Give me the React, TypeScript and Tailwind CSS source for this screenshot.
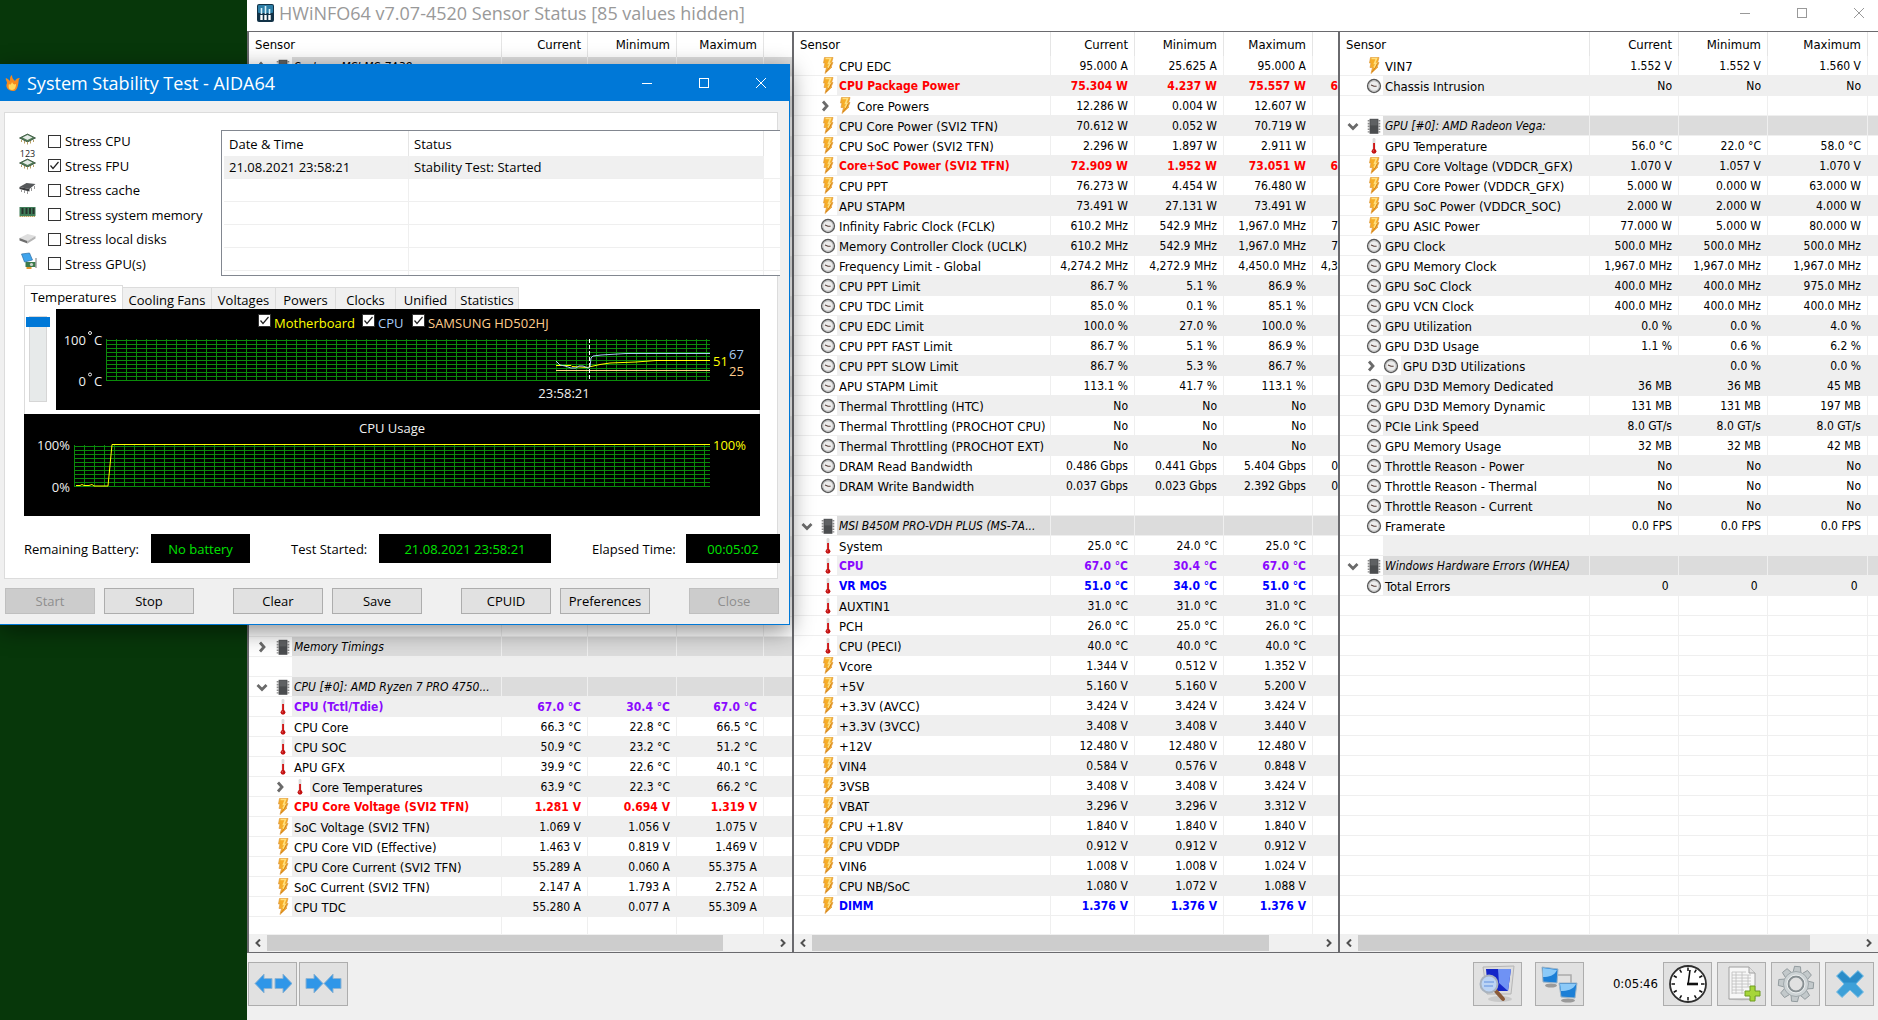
import type { ReactNode } from "react"

type Kind = "bolt" | "temp" | "clock" | "chip"
type Tone = "normal" | "red" | "violet" | "blue"

type SensorRow = {
  kind?: Kind
  name?: string
  values?: string[]
  tone?: Tone
  group?: "open" | "closed"
  sub?: boolean
  alt?: boolean
  // clipped start of the Average column
  rest?: string
}

const TONES: Record<Tone, string> = {
  normal: "text-black",
  red: "font-bold text-[#ff0000]",
  violet: "font-bold text-[#8a0aff]",
  blue: "font-bold text-[#0000ff]",
}

const row = (kind: Kind, name: string, a: string, b: string, c: string, extra: SensorRow = {}): SensorRow => ({
  kind,
  name,
  values: [a, b, c],
  ...extra,
})
const group = (name: string, state: "open" | "closed" = "open"): SensorRow => ({ kind: "chip", name, group: state })
const blanks = (count: number): SensorRow[] => Array.from({ length: count }, () => ({}))

// Every other row is shaded, starting with row `first`
const stripe = (rows: SensorRow[], first: number): SensorRow[] =>
  rows.map((r, i) => ({ ...r, alt: r.alt ?? i % 2 === first }))

const LEFT_ROWS: SensorRow[] = [
  ...stripe(
    [
      group("System: MSI MS-7A38", "closed"),
      ...blanks(27),
      { alt: false },
      group("Memory Timings", "closed"),
      {},
      group("CPU [#0]: AMD Ryzen 7 PRO 4750..."),
      row("temp", "CPU (Tctl/Tdie)", "67.0 °C", "30.4 °C", "67.0 °C", { tone: "violet" }),
      row("temp", "CPU Core", "66.3 °C", "22.8 °C", "66.5 °C"),
      row("temp", "CPU SOC", "50.9 °C", "23.2 °C", "51.2 °C"),
      row("temp", "APU GFX", "39.9 °C", "22.6 °C", "40.1 °C"),
      row("temp", "Core Temperatures", "63.9 °C", "22.3 °C", "66.2 °C", { sub: true }),
      row("bolt", "CPU Core Voltage (SVI2 TFN)", "1.281 V", "0.694 V", "1.319 V", { tone: "red" }),
      row("bolt", "SoC Voltage (SVI2 TFN)", "1.069 V", "1.056 V", "1.075 V"),
      row("bolt", "CPU Core VID (Effective)", "1.463 V", "0.819 V", "1.469 V"),
      row("bolt", "CPU Core Current (SVI2 TFN)", "55.289 A", "0.060 A", "55.375 A"),
      row("bolt", "SoC Current (SVI2 TFN)", "2.147 A", "1.793 A", "2.752 A"),
      row("bolt", "CPU TDC", "55.280 A", "0.077 A", "55.309 A"),
    ],
    0,
  ),
  ...blanks(1),
]

const MIDDLE_ROWS: SensorRow[] = [
  ...stripe(
    [
      row("bolt", "CPU EDC", "95.000 A", "25.625 A", "95.000 A"),
      row("bolt", "CPU Package Power", "75.304 W", "4.237 W", "75.557 W", { tone: "red", rest: "6" }),
      row("bolt", "Core Powers", "12.286 W", "0.004 W", "12.607 W", { sub: true }),
      row("bolt", "CPU Core Power (SVI2 TFN)", "70.612 W", "0.052 W", "70.719 W"),
      row("bolt", "CPU SoC Power (SVI2 TFN)", "2.296 W", "1.897 W", "2.911 W"),
      row("bolt", "Core+SoC Power (SVI2 TFN)", "72.909 W", "1.952 W", "73.051 W", { tone: "red", rest: "6" }),
      row("bolt", "CPU PPT", "76.273 W", "4.454 W", "76.480 W"),
      row("bolt", "APU STAPM", "73.491 W", "27.131 W", "73.491 W"),
      row("clock", "Infinity Fabric Clock (FCLK)", "610.2 MHz", "542.9 MHz", "1,967.0 MHz", { rest: "7" }),
      row("clock", "Memory Controller Clock (UCLK)", "610.2 MHz", "542.9 MHz", "1,967.0 MHz", { rest: "7" }),
      row("clock", "Frequency Limit - Global", "4,274.2 MHz", "4,272.9 MHz", "4,450.0 MHz", { rest: "4,3" }),
      row("clock", "CPU PPT Limit", "86.7 %", "5.1 %", "86.9 %"),
      row("clock", "CPU TDC Limit", "85.0 %", "0.1 %", "85.1 %"),
      row("clock", "CPU EDC Limit", "100.0 %", "27.0 %", "100.0 %"),
      row("clock", "CPU PPT FAST Limit", "86.7 %", "5.1 %", "86.9 %"),
      row("clock", "CPU PPT SLOW Limit", "86.7 %", "5.3 %", "86.7 %"),
      row("clock", "APU STAPM Limit", "113.1 %", "41.7 %", "113.1 %"),
      row("clock", "Thermal Throttling (HTC)", "No", "No", "No"),
      row("clock", "Thermal Throttling (PROCHOT CPU)", "No", "No", "No"),
      row("clock", "Thermal Throttling (PROCHOT EXT)", "No", "No", "No"),
      row("clock", "DRAM Read Bandwidth", "0.486 Gbps", "0.441 Gbps", "5.404 Gbps", { rest: "0" }),
      row("clock", "DRAM Write Bandwidth", "0.037 Gbps", "0.023 Gbps", "2.392 Gbps", { rest: "0" }),
      {},
      group("MSI B450M PRO-VDH PLUS (MS-7A..."),
      row("temp", "System", "25.0 °C", "24.0 °C", "25.0 °C"),
      row("temp", "CPU", "67.0 °C", "30.4 °C", "67.0 °C", { tone: "violet" }),
      row("temp", "VR MOS", "51.0 °C", "34.0 °C", "51.0 °C", { tone: "blue" }),
      row("temp", "AUXTIN1", "31.0 °C", "31.0 °C", "31.0 °C"),
      row("temp", "PCH", "26.0 °C", "25.0 °C", "26.0 °C"),
      row("temp", "CPU (PECI)", "40.0 °C", "40.0 °C", "40.0 °C"),
      row("bolt", "Vcore", "1.344 V", "0.512 V", "1.352 V"),
      row("bolt", "+5V", "5.160 V", "5.160 V", "5.200 V"),
      row("bolt", "+3.3V (AVCC)", "3.424 V", "3.424 V", "3.424 V"),
      row("bolt", "+3.3V (3VCC)", "3.408 V", "3.408 V", "3.440 V"),
      row("bolt", "+12V", "12.480 V", "12.480 V", "12.480 V"),
      row("bolt", "VIN4", "0.584 V", "0.576 V", "0.848 V"),
      row("bolt", "3VSB", "3.408 V", "3.408 V", "3.424 V"),
      row("bolt", "VBAT", "3.296 V", "3.296 V", "3.312 V"),
      row("bolt", "CPU +1.8V", "1.840 V", "1.840 V", "1.840 V"),
      row("bolt", "CPU VDDP", "0.912 V", "0.912 V", "0.912 V"),
      row("bolt", "VIN6", "1.008 V", "1.008 V", "1.024 V"),
      row("bolt", "CPU NB/SoC", "1.080 V", "1.072 V", "1.088 V"),
      row("bolt", "DIMM", "1.376 V", "1.376 V", "1.376 V", { tone: "blue" }),
    ],
    1,
  ),
  ...blanks(1),
]

const RIGHT_ROWS: SensorRow[] = [
  ...stripe(
    [
      row("bolt", "VIN7", "1.552 V", "1.552 V", "1.560 V"),
      row("clock", "Chassis Intrusion", "No", "No", "No"),
      {},
      group("GPU [#0]: AMD Radeon Vega:"),
      row("temp", "GPU Temperature", "56.0 °C", "22.0 °C", "58.0 °C"),
      row("bolt", "GPU Core Voltage (VDDCR_GFX)", "1.070 V", "1.057 V", "1.070 V"),
      row("bolt", "GPU Core Power (VDDCR_GFX)", "5.000 W", "0.000 W", "63.000 W"),
      row("bolt", "GPU SoC Power (VDDCR_SOC)", "2.000 W", "2.000 W", "4.000 W"),
      row("bolt", "GPU ASIC Power", "77.000 W", "5.000 W", "80.000 W"),
      row("clock", "GPU Clock", "500.0 MHz", "500.0 MHz", "500.0 MHz"),
      row("clock", "GPU Memory Clock", "1,967.0 MHz", "1,967.0 MHz", "1,967.0 MHz"),
      row("clock", "GPU SoC Clock", "400.0 MHz", "400.0 MHz", "975.0 MHz"),
      row("clock", "GPU VCN Clock", "400.0 MHz", "400.0 MHz", "400.0 MHz"),
      row("clock", "GPU Utilization", "0.0 %", "0.0 %", "4.0 %"),
      row("clock", "GPU D3D Usage", "1.1 %", "0.6 %", "6.2 %"),
      row("clock", "GPU D3D Utilizations", "", "0.0 %", "0.0 %", { sub: true }),
    ],
    1,
  ),
  ...stripe(
    [
      row("clock", "GPU D3D Memory Dedicated", "36 MB", "36 MB", "45 MB"),
      row("clock", "GPU D3D Memory Dynamic", "131 MB", "131 MB", "197 MB"),
      row("clock", "PCIe Link Speed", "8.0 GT/s", "8.0 GT/s", "8.0 GT/s"),
      row("clock", "GPU Memory Usage", "32 MB", "32 MB", "42 MB"),
      row("clock", "Throttle Reason - Power", "No", "No", "No"),
      row("clock", "Throttle Reason - Thermal", "No", "No", "No"),
      row("clock", "Throttle Reason - Current", "No", "No", "No"),
      row("clock", "Framerate", "0.0 FPS", "0.0 FPS", "0.0 FPS"),
      {},
      group("Windows Hardware Errors (WHEA)"),
      row("clock", "Total Errors", "0 ", "0 ", "0 "),
    ],
    0,
  ),
  ...blanks(17),
]

function SensorIcon({ kind }: { kind: Kind }) {
  if (kind === "bolt") {
    return (
      <svg className="h-[17px] w-4 shrink-0" viewBox="0 0 16 17">
        <path d="M4.500.5H13L11.600 5.500H13L11 10h1L5 16.500 6.500 10.500H4L5 6H3.500z" fill="#f6ad28" stroke="#e09a3c" strokeWidth=".7" />
        <path d="M5.500 1.500h5L8.500 6.500l2 0-2.500 4" fill="none" stroke="#ffdf7e" strokeWidth="1.6" />
        <path d="M11.500 6.200 9.500 10.500 6 15" fill="none" stroke="#c97a16" strokeWidth=".9" />
      </svg>
    )
  }
  if (kind === "temp") {
    return (
      <svg className="h-4 w-4 shrink-0" viewBox="0 0 16 16">
        <rect x="6.6" y="0" width="2.8" height="12" rx="1.2" fill="#dcdcdc" />
        <rect x="7.1" y="5" width="1.9" height="8" fill="#d01818" />
        <circle cx="8" cy="13.3" r="2.4" fill="#c31212" />
        <circle cx="7.3" cy="12.8" r=".6" fill="#f08080" />
      </svg>
    )
  }
  if (kind === "clock") {
    return (
      <svg className="h-4 w-4 shrink-0" viewBox="0 0 16 16">
        <circle cx="8" cy="8" r="6.4" fill="#ececec" stroke="#5a5a5a" strokeWidth="1.5" />
        <circle cx="8" cy="8" r="5.2" fill="none" stroke="#bdbdbd" strokeWidth="1" />
        <path d="M5 7 8 8.2h2.6" fill="none" stroke="#5a4038" strokeWidth="1.1" />
      </svg>
    )
  }
  return (
    <svg className="h-4 w-4 shrink-0" viewBox="0 0 16 16">
      <path d="M2.6 2v12.6M13.4 2v12.6" stroke="#8a8a8a" strokeWidth="1.8" strokeDasharray="1.6 1.2" />
      <rect x="3.6" y=".8" width="8.8" height="15" fill="#4b4d4f" />
      <rect x="4.4" y="1.4" width="7.2" height="6" fill="#5f6163" />
    </svg>
  )
}

function Chevron({ open }: { open: boolean }) {
  return (
    <svg className="h-3 w-3" viewBox="0 0 12 12" fill="none" stroke="#6a6a6a" strokeWidth="2.8">
      <path d={open ? "M1.5 4 6 8.5 10.500 4" : "M4 1.5 8 6l-4 4.500"} />
    </svg>
  )
}

function SensorLine({ r }: { r: SensorRow }) {
  const bg = r.group ? "bg-[#dcdcdc]" : r.alt ? "bg-[#efefef]" : "bg-white"
  const cell = `h-5 overflow-hidden border-b border-r border-[#efefef] p-0 whitespace-pre ${bg}`
  const tone = r.tone ?? "normal"
  const nameStyle = r.group ? "italic" : tone === "normal" ? "text-[13px]" : ""
  return (
    <tr className={TONES[tone]}>
      <td className={cell}>
        <div className="flex h-[19px] items-center">
          {r.sub ? (
            <div className="flex h-full w-[61px] shrink-0 items-center bg-white pl-[22px]">
              <button aria-label={`Expand ${r.name}`} className="mr-[3px] flex w-[18px] justify-center">
                <Chevron open={false} />
              </button>
              {r.kind && <SensorIcon kind={r.kind} />}
            </div>
          ) : (
            <div className="flex h-full w-[43px] shrink-0 items-center bg-white">
              <div className="flex w-[26px] justify-center">
                {r.group && (
                  <button aria-label={`Toggle ${r.name}`}>
                    <Chevron open={r.group === "open"} />
                  </button>
                )}
              </div>
              {r.kind && <SensorIcon kind={r.kind} />}
            </div>
          )}
          <span className={`pt-[2px] pl-[2px] ${nameStyle}`}>{r.name}</span>
        </div>
      </td>
      {[0, 1, 2].map((i) => (
        <td key={i} className={`${cell} pt-[2px] pr-[6px] text-right`}>
          {r.values?.[i]}
        </td>
      ))}
      <td className={`h-5 overflow-hidden border-b border-[#efefef] p-0 pt-[2px] text-right whitespace-pre ${bg}`}>
        {r.rest}
      </td>
    </tr>
  )
}

function ScrollBar() {
  return (
    <div className="flex h-[18px] shrink-0 items-center bg-[#f0f0f0] py-px">
      <button aria-label="Scroll left" className="flex w-[18px] shrink-0 justify-center">
        <svg className="h-2 w-2" viewBox="0 0 8 8" fill="none" stroke="#505050" strokeWidth="2">
          <path d="M6 .5 2.500 4 6 7.500" />
        </svg>
      </button>
      <div className="h-full flex-1">
        <div className="h-full w-[90%] bg-[#cdcdcd]" />
      </div>
      <button aria-label="Scroll right" className="flex w-[18px] shrink-0 justify-center">
        <svg className="h-2 w-2" viewBox="0 0 8 8" fill="none" stroke="#505050" strokeWidth="2">
          <path d="M2 .5 5.500 4 2 7.500" />
        </svg>
      </button>
    </div>
  )
}

function SensorPanel({ rows, cols, headHeight }: { rows: SensorRow[]; cols: string[]; headHeight: string }) {
  const head = "border-r border-[#e5e5e5] p-0 text-[13px] font-normal"
  return (
    <section className="flex min-h-0 min-w-0 flex-col border-l-2 border-[#6a6a6e] bg-white">
      <div className="min-h-0 flex-1 overflow-hidden">
        <table className="w-full table-fixed border-separate border-spacing-0 font-['DejaVu_Sans_Condensed','DejaVu_Sans',sans-serif] text-[12px] leading-[17px] text-black">
          <colgroup>
            <col />
            {cols.map((w, i) => (
              <col key={i} className={w} />
            ))}
          </colgroup>
          <thead>
            <tr className={headHeight}>
              <th className={`${head} pl-[6px] text-left`}>Sensor</th>
              <th className={`${head} pr-[6px] text-right`}>Current</th>
              <th className={`${head} pr-[6px] text-right`}>Minimum</th>
              <th className={`${head} pr-[6px] text-right`}>Maximum</th>
              <th className="p-0" />
            </tr>
          </thead>
          <tbody>
            {rows.map((r, i) => (
              <SensorLine key={i} r={r} />
            ))}
          </tbody>
        </table>
      </div>
      <ScrollBar />
    </section>
  )
}

function ToolButton({ label, children }: { label: string; children: ReactNode }) {
  return (
    <button
      aria-label={label}
      className="flex h-11 w-[49px] shrink-0 items-center justify-center border border-[#adadad] bg-[#e1e1e1]"
    >
      {children}
    </button>
  )
}

const ARROW_RIGHT = "M1 5.500h8V1l9 9.500L9 20v-4.500H1z"
const ARROW_LEFT = "M18 5.500h-8V1l-9 9.500L10 20v-4.500h8z"

function ArrowPair({ inward }: { inward: boolean }) {
  return (
    <svg className="h-[22px] w-[38px]" viewBox="0 0 38 22" fill="#2f96e8" stroke="#8fb4d2" strokeWidth="1">
      <path d={inward ? ARROW_RIGHT : ARROW_LEFT} />
      <path d={inward ? ARROW_LEFT : ARROW_RIGHT} transform={inward ? "translate(18 0)" : "translate(20 0)"} />
    </svg>
  )
}

function Toolbar() {
  return (
    <footer className="flex h-[67px] shrink-0 items-start justify-between bg-[#f0f0f0] pt-[9px] pr-1 pl-px">
      <div className="flex gap-[2px]">
        <ToolButton label="Expand columns">
          <ArrowPair inward={false} />
        </ToolButton>
        <ToolButton label="Shrink columns">
          <ArrowPair inward />
        </ToolButton>
      </div>
      <div className="flex items-center">
        <div className="flex gap-[13px]">
          <ToolButton label="Summary">
            <svg className="h-[38px] w-[38px]" viewBox="0 0 38 38">
              <ellipse cx="22" cy="34" rx="12" ry="3" fill="#c9c9c9" />
              <path d="M5 2l31-1-3 28H9z" fill="#dcdcdc" stroke="#b5b5b5" />
              <path d="M8 4h25l-3 22H10z" fill="#1426c8" />
              <path d="M20 4h13l-3 22-9-8z" fill="#6f92f4" />
              <path d="M17 25l8 9" stroke="#8a5a38" strokeWidth="4" strokeLinecap="round" />
              <circle cx="11" cy="19" r="8.500" fill="#bcd4f4" stroke="#a9b3bf" strokeWidth="2" />
              <path d="M6 17h10M6 21h9" stroke="#7fa6e6" strokeWidth="1.5" />
            </svg>
          </ToolButton>
          <ToolButton label="Remote monitoring">
            <svg className="h-[38px] w-[38px]" viewBox="0 0 38 38">
              <path d="M18 10h13v10" fill="none" stroke="#aaa" strokeWidth="1.5" />
              <ellipse cx="11" cy="20.500" rx="6" ry="2" fill="#9a9a9a" />
              <path d="M2 2l16 2-1 14-14-1z" fill="#1c7fd6" stroke="#9db4c6" />
              <path d="M3 3l14 2c-3 6-8 7-14 7z" fill="#8ccaf8" />
              <ellipse cx="28" cy="35.500" rx="7" ry="2" fill="#9a9a9a" />
              <path d="M19 18l18 0-2 15-14-1z" fill="#1c7fd6" stroke="#9db4c6" />
              <path d="M20 19h16c-3 6-9 7-15 7z" fill="#8ccaf8" />
            </svg>
          </ToolButton>
        </div>
        <span className="pr-[5px] pl-[29px] font-['DejaVu_Sans_Condensed','DejaVu_Sans',sans-serif] text-[13px] text-black">
          0:05:46
        </span>
        <div className="flex gap-[5px]">
          <ToolButton label="Reset timer">
            <svg className="h-10 w-10" viewBox="0 0 40 40">
              <circle cx="20" cy="20" r="18" fill="#fff" stroke="#2e2e2e" strokeWidth="1.8" />
              {Array.from({ length: 12 }, (_, i) => (
                <path key={i} d="M20 3.500V7" stroke="#111" strokeWidth="1.5" transform={`rotate(${i * 30} 20 20)`} />
              ))}
              <path d="M20 21l2-15" stroke="#111" strokeWidth="1.6" />
              <path d="M19 20h11" stroke="#111" strokeWidth="2.600" />
            </svg>
          </ToolButton>
          <ToolButton label="Log to file">
            <svg className="h-[38px] w-[38px]" viewBox="0 0 38 38">
              <ellipse cx="19" cy="34" rx="14" ry="1.5" fill="#c8c8c8" />
              <path d="M6 2h20l6 6v26H6z" fill="#f7f7f7" stroke="#a0a0a0" />
              <path d="M26 2v6h6" fill="#e2e2e2" stroke="#a0a0a0" />
              <path
                d="M9 7h14M9 10h19M9 13h19M9 16h19M9 19h19M9 22h19M9 25h12M9 28h12M13 7v22M19 7v22M25 10v12M9 7v22"
                stroke="#c2c2c2"
                strokeWidth=".9"
              />
              <path d="M27 21h5v5h5v5h-5v5h-5v-5h-5v-5h5z" fill="#a6d638" stroke="#6f9c22" />
            </svg>
          </ToolButton>
          <ToolButton label="Settings">
            <svg className="h-[38px] w-[38px]" viewBox="0 0 38 38">
              {Array.from({ length: 8 }, (_, i) => (
                <path
                  key={i}
                  d="M15 8l1-6.500h6L23 8z"
                  fill="#c3c9cb"
                  stroke="#8f989b"
                  strokeWidth=".9"
                  transform={`rotate(${i * 45 + 5} 19 19)`}
                />
              ))}
              <circle cx="19" cy="19" r="12.500" fill="#cdd3d5" stroke="#a0a8ab" />
              <circle cx="19" cy="19" r="7.500" fill="#e1e1e1" stroke="#878f92" strokeWidth="2" />
              <circle cx="19" cy="19" r="9" fill="none" stroke="#eef1f2" strokeWidth=".9" />
            </svg>
          </ToolButton>
          <ToolButton label="Close sensors">
            <svg className="h-[30px] w-[30px]" viewBox="0 0 30 30">
              <path
                d="M7 1.500 15 9l8-7.500L28.500 7 21 15l7.500 8-5.500 5.500L15 21l-8 7.500L1.500 23 9 15 1.500 7z"
                fill="#3da0d8"
                stroke="#7dbfe4"
                strokeLinejoin="round"
              />
              <path d="M7 2.500 15 10l8-7.500L27.500 7 21 13.500H9L2.500 7z" fill="#2b8cc8" />
            </svg>
          </ToolButton>
        </div>
      </div>
    </footer>
  )
}

function WindowControls({ className }: { className: string }) {
  return (
    <div className={`flex items-center ${className}`}>
      <button aria-label="Minimize">
        <svg className="h-3 w-3" viewBox="0 0 12 12" stroke="currentColor">
          <path d="M1 6.500h10" />
        </svg>
      </button>
      <button aria-label="Maximize">
        <svg className="h-3 w-3" viewBox="0 0 12 12" fill="none" stroke="currentColor">
          <rect x="1.5" y="1.5" width="9" height="9" />
        </svg>
      </button>
      <button aria-label="Close">
        <svg className="h-3 w-3" viewBox="0 0 12 12" stroke="currentColor">
          <path d="M1 1l10 10M11 1 1 11" />
        </svg>
      </button>
    </div>
  )
}

function CheckBox({ id, checked = false }: { id: string; checked?: boolean }) {
  return (
    <span className="grid h-[13px] w-[13px] shrink-0">
      <input
        id={id}
        type="checkbox"
        defaultChecked={checked}
        className="peer col-start-1 row-start-1 h-[13px] w-[13px] appearance-none border border-[#333] bg-white"
      />
      <svg
        className="pointer-events-none invisible col-start-1 row-start-1 h-[13px] w-[13px] peer-checked:visible"
        viewBox="0 0 13 13"
        fill="none"
        stroke="#222"
        strokeWidth="1.2"
      >
        <path d="M2.500 6.500 5 9.500 10.500 3" />
      </svg>
    </span>
  )
}

const chipBoard = (
  <>
    <path d="M1 8l8-4 8 4-8 4z" fill="#4f7a55" stroke="#38523c" strokeWidth=".8" />
    <path d="M4 7.500 9 5l5 2.500L9 10z" fill="#e6ece8" />
    <path d="M3 10v2M6 11v2.500M9 12v2.500M12 11v2.500M15 10v2" stroke="#b8a066" strokeWidth="1" />
  </>
)

const STRESS_OPTIONS: { id: string; label: string; checked?: boolean; icon: ReactNode }[] = [
  { id: "cpu", label: "Stress CPU", icon: chipBoard },
  {
    id: "fpu",
    label: "Stress FPU",
    checked: true,
    icon: (
      <>
        <text x="9" y="2" textAnchor="middle" fontSize="9" fill="#222">
          123
        </text>
        {chipBoard}
      </>
    ),
  },
  {
    id: "cache",
    label: "Stress cache",
    icon: (
      <>
        <path d="M1 8l7-4 9 1-6 5z" fill="#55585a" />
        <path d="M1 8l10 2v2.500L1 10z" fill="#3b3d3f" />
        <path d="M3 10v3M6 11v3M9 12v3M13 9v3M16 7v3" stroke="#9a9a9a" strokeWidth="1" />
      </>
    ),
  },
  {
    id: "memory",
    label: "Stress system memory",
    icon: (
      <>
        <path d="M1 3h16v9H1z" fill="#3f7d58" />
        <path d="M3 4h2v6H3zM7 4h2v6H7zM10.500 4h2v6h-2zM14 4h2v6h-2z" fill="#26352c" />
        <path d="M1 12.500h16" stroke="#b9a25c" strokeDasharray="1.500 .5" />
      </>
    ),
  },
  {
    id: "disks",
    label: "Stress local disks",
    icon: (
      <>
        <path d="M1 10l8-4 8 2-8 5z" fill="#dedede" />
        <path d="M1 10l8 3v2.500l-8-3z" fill="#6e6e6e" />
        <path d="M9 13l8-5v2.500l-8 5z" fill="#b4b4b4" />
      </>
    ),
  },
  {
    id: "gpu",
    label: "Stress GPU(s)",
    icon: (
      <>
        <path d="M3 1l8-1 3 7-8 2z" fill="#3fa4ec" stroke="#2b6fa6" strokeWidth=".7" />
        <path d="M7 9h10v5H7z" fill="#3c7a4a" />
        <circle cx="13" cy="11.500" r="1.600" fill="#cfd6d0" />
        <path d="M8 14h5v2H8z" fill="#e0962e" />
        <path d="M17.500 5v10" stroke="#777" />
      </>
    ),
  },
]

const TABS = [
  { label: "Cooling Fans", width: "w-[89px]" },
  { label: "Voltages", width: "w-16" },
  { label: "Powers", width: "w-[60px]" },
  { label: "Clocks", width: "w-[60px]" },
  { label: "Unified", width: "w-[60px]" },
  { label: "Statistics", width: "w-[63px]" },
]

function Grid({ x, top, width }: { x: number; top: number; width: number }) {
  const cols = Math.ceil(width / 10)
  return (
    <g stroke="#0a8a0a" shapeRendering="crispEdges">
      {Array.from({ length: cols }, (_, i) => (
        <path key={i} d={`M${x + i * 10 + 0.5} ${top}v42`} />
      ))}
      {Array.from({ length: 11 }, (_, i) => (
        <path key={i} d={`M${x} ${top + i * 4 + 1.5}h${width}`} />
      ))}
    </g>
  )
}

function TemperatureChart() {
  return (
    <div className="h-[101px] w-[704px] bg-black">
      <div className="flex h-5 items-start pt-[5px] pl-[202px] text-[13px] leading-[18px]">
        <CheckBox id="legend-mb" checked />
        <label htmlFor="legend-mb" className="w-[91px] pl-[3px] text-[#ffff00]">
          Motherboard
        </label>
        <CheckBox id="legend-cpu" checked />
        <label htmlFor="legend-cpu" className="w-[37px] pl-[3px] text-[#a9cdf5]">
          CPU
        </label>
        <CheckBox id="legend-hdd" checked />
        <label htmlFor="legend-hdd" className="pl-[3px] text-[#ffcc8c]">
          SAMSUNG HD502HJ
        </label>
      </div>
      <svg className="h-[81px] w-[704px] text-[13px]" viewBox="0 -8 704 81">
        <Grid x={50} top={2} width={604} />
        <g fill="#f0f0f0">
          <text x="30" y="8" textAnchor="end">100</text>
          <circle cx="34" cy="-4" r="1.5" fill="none" stroke="#f0f0f0" />
          <text x="38" y="8">C</text>
          <text x="30" y="49" textAnchor="end">0</text>
          <circle cx="34" cy="37.500" r="1.5" fill="none" stroke="#f0f0f0" />
          <text x="38" y="49">C</text>
          <text x="508" y="61" textAnchor="middle">23:58:21</text>
        </g>
        <path d="M500 33.500h154" stroke="#ffdc82" />
        <path d="M500 28.500h15l1 1 15 1 4-1 9-2 10-1.500 26-1 20-1.500h54" fill="none" stroke="#ffff00" />
        <path
          d="M500 24l4 4 5 1 6 2h5l3-2 4 0 5 2 2-1 1-9 2-2 8-1 25-1.500h84"
          fill="none"
          stroke="#a9cdf5"
        />
        <path d="M533.500 2v40" stroke="#fff" strokeDasharray="4 2" />
        <text x="657" y="29" fill="#ffff00">51</text>
        <text x="673" y="22" fill="#a9cdf5">67</text>
        <text x="673" y="39" fill="#ffcc8c">25</text>
      </svg>
    </div>
  )
}

function UsageChart() {
  return (
    <svg className="h-[102px] w-[736px] bg-black text-[13px]" viewBox="0 0 736 102">
      <text x="368" y="19" textAnchor="middle" fill="#f0f0f0">CPU Usage</text>
      <Grid x={50} top={31} width={636} />
      <text x="46" y="36" textAnchor="end" fill="#f0f0f0">100%</text>
      <text x="46" y="78" textAnchor="end" fill="#f0f0f0">0%</text>
      <path d="M52 71.500h4l2-1 2 1h5l3-1 2 1.500h14l4-41.500h598" fill="none" stroke="#ffff00" />
      <text x="689" y="36" fill="#ffff00">100%</text>
    </svg>
  )
}

function DialogButton({ children, disabled = false }: { children: ReactNode; disabled?: boolean }) {
  return (
    <button
      disabled={disabled}
      className="h-[26px] w-[90px] border border-[#adadad] bg-[#e1e1e1] text-black disabled:border-[#bfbfbf] disabled:bg-[#cccccc] disabled:text-[#8e8e8e]"
    >
      {children}
    </button>
  )
}

function Readout({ className, children }: { className: string; children: ReactNode }) {
  return (
    <output className={`flex h-[29px] items-center justify-center bg-black text-[#00e400] ${className}`}>{children}</output>
  )
}

function StabilityTest() {
  const listCell = "h-[23px] border-b border-r border-[#efefef] p-0 pl-[5px]"
  return (
    <div className="absolute top-16 left-0 w-[790px] border-r border-b border-[#0078d7] bg-[#f0f0f0] pb-[10px] font-['Open_Sans','Noto_Sans',sans-serif] text-[13px] leading-[20px] text-black shadow-[0_6px_22px_rgba(0,0,0,0.45)]">
      <header className="flex h-[37px] items-center bg-[#0078d7] pr-[22px] pl-1 text-white">
        <svg className="h-[18px] w-[18px]" viewBox="0 0 18 18">
          <path d="M9 17C4 17 1 13 3 9c0-2-2-4-1-5 2 1 3 2 4 3 0-3 0-5 2-6 0 3 1 4 3 6 1-2 2-3 5-3-2 2-1 4-2 7-1 4-2 6-5 6z" fill="#f58a1e" />
          <path d="M8 16c-3 0-4-3-3-6 1 1 2 1 3-2 1 2 2 3 4 2 0 3-1 6-4 6z" fill="#ffd65a" />
        </svg>
        <h1 className="flex-1 pl-[5px] text-[18px]">System Stability Test - AIDA64</h1>
        <WindowControls className="gap-[45px]" />
      </header>

      <main className="mt-[11px] mr-[11px] ml-1 border border-[#dcdcdc] bg-white pt-[17px] pb-[15px] pl-[19px]">
        <div className="flex h-[146px]">
          <div className="-ml-[6px] flex w-[203px] shrink-0 flex-col justify-between pb-px">
            {STRESS_OPTIONS.map((o) => (
              <div key={o.id} className="flex h-[22px] items-center">
                <svg className="mr-[11px] h-4 w-[19px] self-start overflow-visible" viewBox="0 0 18 16">
                  {o.icon}
                </svg>
                <CheckBox id={o.id} checked={o.checked} />
                <label htmlFor={o.id} className="pl-1">
                  {o.label}
                </label>
              </div>
            ))}
          </div>
          <div className="-mr-[3px] min-w-0 flex-1 overflow-hidden border-y border-l border-[#828790] bg-white pl-[2px]">
            <table className="w-full table-fixed border-separate border-spacing-0">
              <colgroup>
                <col className="w-[185px]" />
                <col />
                <col className="w-4" />
              </colgroup>
              <thead>
                <tr className="h-[25px] text-left">
                  <th className="border-r border-[#e5e5e5] p-0 pl-[5px] font-normal">Date &amp; Time</th>
                  <th className="border-r border-[#e5e5e5] p-0 pl-[5px] font-normal">Status</th>
                  <th className="p-0" />
                </tr>
              </thead>
              <tbody>
                <tr>
                  <td className={`${listCell} bg-[#f0f0f0]`}>21.08.2021 23:58:21</td>
                  <td className={`${listCell} bg-[#f0f0f0]`}>Stability Test: Started</td>
                  <td className="border-b border-[#efefef]" />
                </tr>
                {[0, 1, 2, 3, 4].map((i) => (
                  <tr key={i}>
                    <td className={listCell} />
                    <td className={listCell} />
                    <td className="border-b border-[#efefef]" />
                  </tr>
                ))}
              </tbody>
            </table>
          </div>
        </div>

        <div role="tablist" className="mt-[9px] flex h-6 items-end">
          <button
            role="tab"
            aria-selected="true"
            className="h-6 w-[99px] border-x border-t border-[#dcdcdc] bg-white pb-[2px] leading-[20px]"
          >
            Temperatures
          </button>
          {TABS.map((t) => (
            <button
              key={t.label}
              role="tab"
              aria-selected="false"
              className={`h-[22px] border-t border-r border-[#dcdcdc] bg-[#f0f0f0] pt-[2px] text-center leading-[20px] whitespace-nowrap ${t.width}`}
            >
              {t.label}
            </button>
          ))}
        </div>
        <div className="flex w-[736px] border-l border-[#dcdcdc]">
          <div className="w-[31px] pt-1">
            <input
              type="range"
              aria-label="Graph range"
              defaultValue={0}
              className="ml-px block h-[92px] w-6 appearance-none bg-transparent [writing-mode:vertical-lr] [&::-webkit-slider-runnable-track]:mx-[3px] [&::-webkit-slider-runnable-track]:w-[18px] [&::-webkit-slider-runnable-track]:border [&::-webkit-slider-runnable-track]:border-[#d6d6d6] [&::-webkit-slider-runnable-track]:bg-[#e7eaea] [&::-webkit-slider-thumb]:-ml-[4px] [&::-webkit-slider-thumb]:h-[10px] [&::-webkit-slider-thumb]:w-6 [&::-webkit-slider-thumb]:appearance-none [&::-webkit-slider-thumb]:bg-[#0078d7]"
            />
          </div>
          <TemperatureChart />
        </div>
        <div className="h-1 w-[736px] border-x border-[#dcdcdc]" />
        <UsageChart />

        <div className="-mr-[3px] mt-[18px] flex items-center justify-between whitespace-nowrap">
          <div className="flex w-[226px] items-center justify-between">
            Remaining Battery:
            <Readout className="w-[99px]">No battery</Readout>
          </div>
          <div className="flex w-[260px] items-center justify-between">
            Test Started:
            <Readout className="w-[172px]">21.08.2021 23:58:21</Readout>
          </div>
          <div className="flex w-[188px] items-center justify-between">
            Elapsed Time:
            <Readout className="w-[94px]">00:05:02</Readout>
          </div>
        </div>
      </main>

      <div className="mt-[9px] flex justify-between pr-[10px] pl-[5px]">
        <div className="flex gap-[9px]">
          <DialogButton disabled>Start</DialogButton>
          <DialogButton>Stop</DialogButton>
        </div>
        <div className="flex gap-[9px]">
          <DialogButton>Clear</DialogButton>
          <DialogButton>Save</DialogButton>
        </div>
        <div className="flex gap-[9px]">
          <DialogButton>CPUID</DialogButton>
          <DialogButton>Preferences</DialogButton>
        </div>
        <DialogButton disabled>Close</DialogButton>
      </div>
    </div>
  )
}

export default function App() {
  return (
    <div className="relative h-screen overflow-hidden bg-[#07370a] pl-[247px]">
      <div className="flex h-full flex-col bg-white">
        <header className="flex h-[31px] shrink-0 items-center pb-[5px] pl-[10px] font-['Open_Sans','Noto_Sans',sans-serif] text-[18px] text-[#999]">
          <svg className="h-[18px] w-[17px]" viewBox="0 0 17 18">
            <rect width="17" height="18" rx="2" fill="#123247" />
            <rect x="1" y="1" width="15" height="8" rx="1" fill="#2d7ea6" />
            <path d="M4.500 4v6M8.500 2v8M12.500 5v5" stroke="#d8f0fa" strokeWidth="1.6" />
            <path d="M4.500 11v5M8.500 11v5M12.500 11v5" stroke="#fff" strokeWidth="2.400" />
          </svg>
          <h2 className="flex-1 pl-[5px]">HWiNFO64 v7.07-4520 Sensor Status [85 values hidden]</h2>
          <WindowControls className="gap-[45px] pr-[13px]" />
        </header>
        <div className="grid min-h-0 flex-1 grid-cols-[545fr_546fr_540fr] border-y border-[#6a6a6e]">
          <SensorPanel rows={LEFT_ROWS} cols={["w-[86px]", "w-[89px]", "w-[87px]", "w-[28px]"]} headHeight="h-[25px]" />
          <SensorPanel rows={MIDDLE_ROWS} cols={["w-[84px]", "w-[89px]", "w-[89px]", "w-[25px]"]} headHeight="h-6" />
          <SensorPanel rows={RIGHT_ROWS} cols={["w-[89px]", "w-[89px]", "w-[100px]", "w-[10px]"]} headHeight="h-6" />
        </div>
        <Toolbar />
      </div>
      <StabilityTest />
    </div>
  )
}
